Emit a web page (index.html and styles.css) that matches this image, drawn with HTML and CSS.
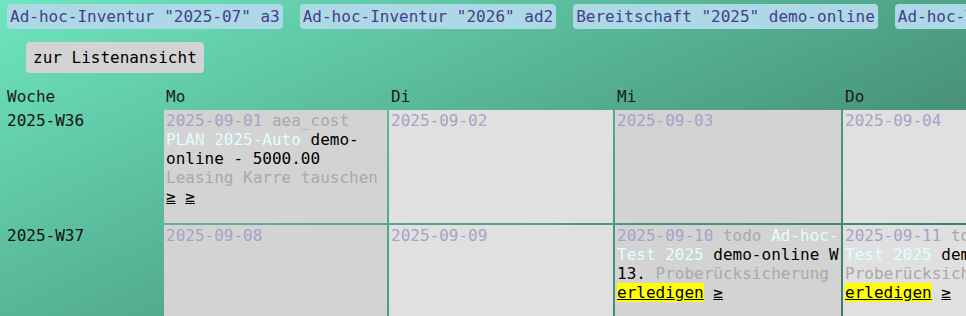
FILE: index.html
```html
<!DOCTYPE html>
<html lang="de">
<head>
<meta charset="utf-8">
<title>Kalender</title>
<link rel="stylesheet" href="styles.css">
</head>
<body>
<div class="page">
  <nav class="tags">
    <a class="tag" href="#">Ad-hoc-Inventur "2025-07" a3</a>
    <a class="tag" href="#">Ad-hoc-Inventur "2026" ad2</a>
    <a class="tag" href="#">Bereitschaft "2025" demo-online</a>
    <a class="tag" href="#">Ad-hoc-Test "2025" demo-online</a>
  </nav>
  <div class="toolbar">
    <button class="btn" type="button">zur Listenansicht</button>
  </div>
  <div class="cal">
    <div class="head">Woche</div>
    <div class="head">Mo</div>
    <div class="head">Di</div>
    <div class="head">Mi</div>
    <div class="head">Do</div>
    <div class="head">Fr</div>
    <div class="head">Sa</div>
    <div class="head">So</div>

    <div class="week">2025-W36</div>
    <div class="day dark"><span class="date">2025-09-01</span> <span class="muted">aea_cost</span> <span class="light">PLAN 2025-Auto</span> demo-online - 5000.00 <span class="muted">Leasing Karre tauschen</span> <a class="act" href="#">≥</a> <a class="act" href="#">≥</a></div>
    <div class="day"><span class="date">2025-09-02</span></div>
    <div class="day dark"><span class="date">2025-09-03</span></div>
    <div class="day"><span class="date">2025-09-04</span></div>
    <div class="day dark"><span class="date">2025-09-05</span></div>
    <div class="day"><span class="date">2025-09-06</span></div>
    <div class="day dark"><span class="date">2025-09-07</span></div>

    <div class="week">2025-W37</div>
    <div class="day dark"><span class="date">2025-09-08</span></div>
    <div class="day"><span class="date">2025-09-09</span></div>
    <div class="day dark"><span class="date">2025-09-10</span> <span class="muted">todo</span> <span class="light">Ad-hoc-Test 2025</span> demo-online W 13. <span class="muted">Proberücksicherung</span> <a class="act todo" href="#">erledigen</a> <a class="act" href="#">≥</a></div>
    <div class="day"><span class="date">2025-09-11</span> <span class="muted">todo</span> <span class="light">Ad-hoc-Test 2025</span> demo-online <span class="muted">Proberücksicherung</span> <a class="act todo" href="#">erledigen</a> <a class="act" href="#">≥</a></div>
    <div class="day dark"><span class="date">2025-09-12</span></div>
    <div class="day"><span class="date">2025-09-13</span></div>
    <div class="day dark"><span class="date">2025-09-14</span></div>
  </div>
</div>
</body>
</html>
```

FILE: styles.css
```css
html, body {
  margin: 0;
  padding: 0;
}

body {
  font-family: "DejaVu Sans Mono", "Liberation Mono", monospace;
  font-size: 16px;
  line-height: 19px;
  color: #000;
}

.page {
  height: 316px;
  overflow: hidden;
  background: linear-gradient(155deg, #6ee6bf 0%, #39725f 100%);
}

.tags {
  display: flex;
  gap: 17px;
  padding: 4px 0 0 7px;
  white-space: nowrap;
}

.tag {
  flex: none;
  padding: 3px;
  border-radius: 4px;
  background: #add8e6;
  color: #483d8b;
  text-decoration: none;
}

.toolbar {
  padding: 13px 0 0 26px;
}

.btn {
  display: block;
  font: inherit;
  line-height: 19px;
  color: #000;
  background: #d3d3d3;
  border: 0;
  border-radius: 4px;
  padding: 6px 7px;
  margin: 0;
}

.cal {
  display: grid;
  grid-template-columns: 157px 223px 224px 226px 250px 224px 224px 224px;
  grid-template-rows: 22px 113px 113px;
  gap: 2px;
  margin: 13px 0 0 5px;
}

.head {
  padding: 1px 1px 2px 2px;
  color: #1a1a1a;
}

.week {
  padding: 1px 1px 1px 2px;
  color: #111;
}

.day {
  box-sizing: border-box;
  padding: 1px 1px 1px 2px;
  background: #e0e0e0;
}

.day.dark {
  background: #d3d3d3;
}

.date {
  color: #a8a2c6;
}

.muted {
  color: #a9a9a9;
}

.light {
  color: #e0ffff;
}

.act {
  color: #000;
  text-decoration: underline;
}

.act.todo {
  background: #ffff00;
}
```
